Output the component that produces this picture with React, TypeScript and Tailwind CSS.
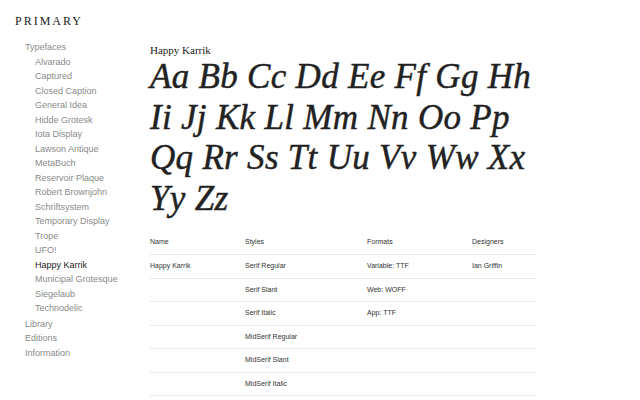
import React from "react";

const sub = [
  "Alvarado",
  "Captured",
  "Closed Caption",
  "General Idea",
  "Hidde Grotesk",
  "Iota Display",
  "Lawson Antique",
  "MetaBuch",
  "Reservoir Plaque",
  "Robert Brownjohn",
  "Schriftsystem",
  "Temporary Display",
  "Trope",
  "UFO!",
  "Happy Karrik",
  "Municipal Grotesque",
  "Siegelaub",
  "Technodelic",
];

const rows = [
  ["Happy Karrik", "Serif Regular", "Variable: TTF", "Ian Griffin"],
  ["", "Serif Slant", "Web: WOFF", ""],
  ["", "Serif Italic", "App: TTF", ""],
  ["", "MidSerif Regular", "", ""],
  ["", "MidSerif Slant", "", ""],
  ["", "MidSerif Italic", "", ""],
];

const lines = [
  "Aa Bb Cc Dd Ee Ff Gg Hh",
  "Ii Jj Kk Ll Mm Nn Oo Pp",
  "Qq Rr Ss Tt Uu Vv Ww Xx",
  "Yy Zz",
];

export default function App() {
  return (
    <div className="flex w-[640px] h-[400px] overflow-hidden bg-white">
      <aside className="w-[150px] shrink-0 pl-[15px] pt-[13px]">
        <div className="font-['Liberation_Serif',serif] text-[12px] tracking-[2px] text-[#222] leading-[16px]">
          PRIMARY
        </div>
        <nav className="mt-[11px] pl-[10px] font-['Liberation_Sans',Arial,sans-serif] text-[9px] leading-[14.5px] text-[#8a8a8a]">
          <div>Typefaces</div>
          <div className="pl-[10px]">
            {sub.map((s) => (
              <div key={s} className={s === "Happy Karrik" ? "text-[#222]" : ""}>
                {s}
              </div>
            ))}
          </div>
          <div className="mt-[1px]">Library</div>
          <div>Editions</div>
          <div>Information</div>
        </nav>
      </aside>
      <main className="flex-1 pt-[43px]">
        <div className="font-['Liberation_Serif',serif] text-[11px] leading-[14px] text-[#222]">
          Happy Karrik
        </div>
        <div className="font-['Liberation_Serif',serif] italic text-[35px] leading-[40.5px] tracking-[0.3px] text-[#222] [-webkit-text-stroke:0.45px_#222]">
          {lines.map((l) => (
            <div key={l} className="whitespace-nowrap">{l}</div>
          ))}
        </div>
        <div className="mt-[12px] w-[387px] font-['Liberation_Sans',Arial,sans-serif] text-[7px] text-[#333]">
          <div className="grid grid-cols-[95px_122px_105px_65px] h-[24px] items-center border-b border-[#ebebeb]">
            <div>Name</div>
            <div>Styles</div>
            <div>Formats</div>
            <div>Designers</div>
          </div>
          {rows.map((r, i) => (
            <div
              key={i}
              className="grid grid-cols-[95px_122px_105px_65px] h-[23.5px] items-center border-b border-[#ebebeb]"
            >
              {r.map((c, j) => (
                <div key={j}>{c}</div>
              ))}
            </div>
          ))}
        </div>
      </main>
    </div>
  );
}
